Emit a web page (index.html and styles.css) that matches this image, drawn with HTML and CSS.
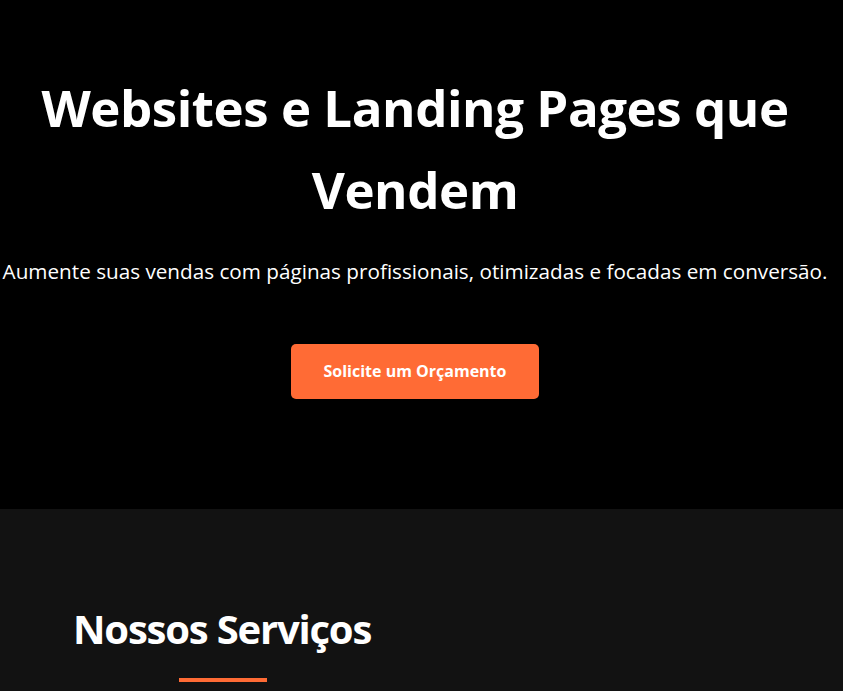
FILE: index.html
```html
<!DOCTYPE html>
<html lang="pt-BR">
<head>
<meta charset="utf-8">
<title>Websites e Landing Pages que Vendem</title>
<link rel="stylesheet" href="styles.css">
</head>
<body>
<section class="hero">
  <h1 class="hero-title">Websites e Landing Pages que Vendem</h1>
  <p class="hero-sub">Aumente suas vendas com páginas profissionais, otimizadas e focadas em conversão.</p>
  <a class="btn" href="#">Solicite um Orçamento</a>
</section>
<section class="services">
  <h2 class="section-title">Nossos Serviços</h2>
</section>
</body>
</html>
```
FILE: styles.css
```css
* { box-sizing: border-box; margin: 0; padding: 0; }
html, body { background: #000; }
body {
  font-family: "Open Sans", "Noto Sans", sans-serif;
  color: #fff;
  line-height: 1.6;
  overflow: hidden;
}
.hero {
  background: #000;
  height: 509px;
  padding: 66px 13px 0 0;
  display: flex;
  flex-direction: column;
  align-items: center;
  text-align: center;
}
.hero-title {
  font-size: 51px;
  font-weight: 700;
  line-height: 82px;
  letter-spacing: -0.45px;
  max-width: 800px;
}
.hero-sub {
  font-size: 20.7px;
  line-height: 33px;
  margin-top: 25px;
  white-space: nowrap;
}
.btn {
  margin-top: 56px;
  display: flex;
  align-items: center;
  justify-content: center;
  width: 248px;
  height: 55px;
  background: #ff6b35;
  border-radius: 5px;
  color: #fff;
  font-weight: 700;
  font-size: 16px;
  text-decoration: none;
}
.services {
  background: #121212;
  height: 182px;
  padding: 96px 0 0 73px;
}
.section-title {
  display: inline-block;
  font-size: 40px;
  font-weight: 700;
  line-height: 48px;
  letter-spacing: -1.2px;
  position: relative;
}
.section-title::after {
  content: "";
  position: absolute;
  left: 50%;
  bottom: -29px;
  width: 88px;
  height: 4px;
  margin-left: -43px;
  background: #ff6b35;
}
```
